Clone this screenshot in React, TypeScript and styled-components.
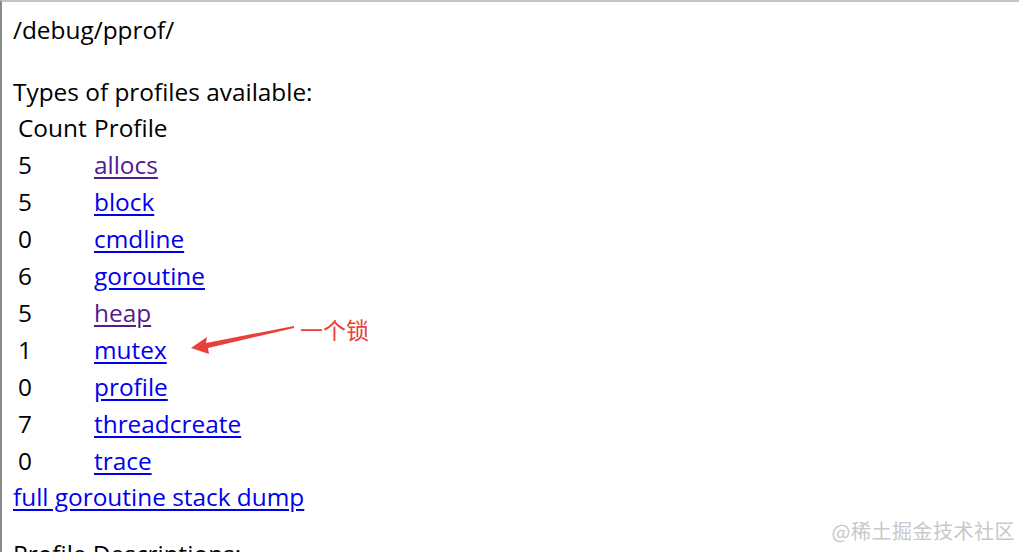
import styled, { createGlobalStyle } from 'styled-components';

const GlobalStyle = createGlobalStyle`
  html, body {
    margin: 0;
    padding: 0;
    background: #fff;
  }
`;

const Frame = styled.div`
  position: relative;
  width: 1019px;
  height: 552px;
  box-sizing: border-box;
  overflow: hidden;
  border-top: 2px solid #c4c4c4;
  border-left: 2px solid #8a8a8a;
  padding: 9px 0 0 11px;
  font-family: "Open Sans", "Noto Sans", sans-serif;
  font-size: 24.4px;
  line-height: 37px;
  color: #000;
`;

const Heading = styled.div`
  margin-bottom: 25px;
`;

const Table = styled.div`
  display: grid;
  grid-template-columns: 76px auto;
  justify-content: start;
  margin-top: -1px;
  padding-left: 5px;
`;

const Cell = styled.div``;

const ProfileLink = styled.a<{ $visited?: boolean }>`
  color: ${(p) => (p.$visited ? '#551a8b' : '#0000ee')};
  text-decoration: underline;
  text-underline-offset: 3px;
`;

const DumpLink = styled.a`
  display: block;
  margin-top: -1px;
  color: #0000ee;
  text-decoration: underline;
  text-underline-offset: 3px;
`;

const Section = styled.div`
  margin-top: 20px;
`;

const Note = styled.div`
  position: absolute;
  left: 186px;
  top: 318px;
  display: flex;
  align-items: center;
  gap: 2px;
  color: #e8403a;
  font-family: "Noto Sans CJK SC", sans-serif;
  font-size: 23px;
  line-height: 30px;
`;

const NoteText = styled.span`
  margin-top: -16px;
`;

const Watermark = styled.div`
  position: absolute;
  right: 4px;
  bottom: 3px;
  color: #c8c8c8;
  font-family: "Noto Sans CJK SC", sans-serif;
  font-size: 20px;
  letter-spacing: 0.5px;
`;

const profiles = [
  { count: 5, name: 'allocs', visited: true },
  { count: 5, name: 'block' },
  { count: 0, name: 'cmdline' },
  { count: 6, name: 'goroutine' },
  { count: 5, name: 'heap', visited: true },
  { count: 1, name: 'mutex' },
  { count: 0, name: 'profile' },
  { count: 7, name: 'threadcreate' },
  { count: 0, name: 'trace' },
];

const App = () => (
  <>
    <GlobalStyle />
    <Frame>
      <Heading>/debug/pprof/</Heading>
      <div>Types of profiles available:</div>
      <Table>
        <Cell>Count</Cell>
        <Cell>Profile</Cell>
        {profiles.map((p) => [
          <Cell key={p.name + '-c'}>{p.count}</Cell>,
          <Cell key={p.name}>
            <ProfileLink href="#" $visited={p.visited}>{p.name}</ProfileLink>
          </Cell>,
        ])}
      </Table>
      <DumpLink href="#">full goroutine stack dump</DumpLink>
      <Section>Profile Descriptions:</Section>
      <Note>
        <svg width="110" height="34" viewBox="0 0 110 34">
          <path d="M3 28 L19 17 L18 23 L106 6 L106 8 L20 28 L21 34 Z" fill="#e8403a" />
        </svg>
        <NoteText>一个锁</NoteText>
      </Note>
      <Watermark>@稀土掘金技术社区</Watermark>
    </Frame>
  </>
);

export default App;
